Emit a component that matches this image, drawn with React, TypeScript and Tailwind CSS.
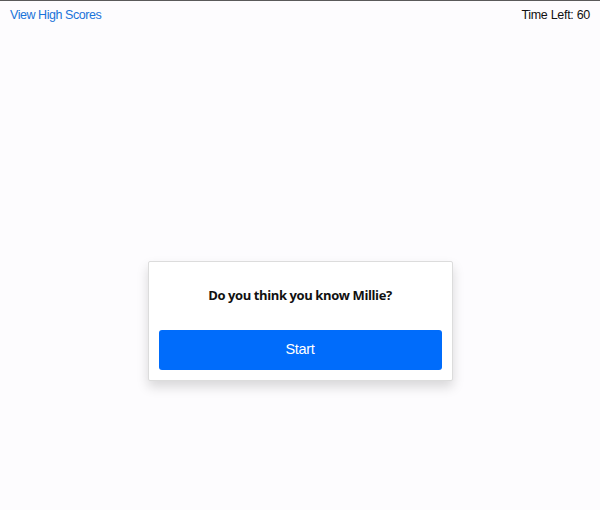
import React from "react";

export default function App() {
  return (
    <div className="min-h-[510px] w-full bg-[#fdfcfe] border-t border-[#5a5a5a] flex flex-col">
      <div className="flex justify-between items-center px-[10px] h-[28px] text-[12.5px] font-['Liberation_Sans',Arial,sans-serif]">
        <a className="text-[#1a73d9] cursor-pointer tracking-[-0.45px]">View High Scores</a>
        <span className="text-[#111] tracking-[-0.3px]">Time Left: 60</span>
      </div>
      <div className="flex justify-center mt-[232px]">
        <div className="w-[305px] bg-white border border-[#dcdcdc] rounded-[2px] shadow-[0_6px_12px_rgba(0,0,0,0.15)] p-[10px] flex flex-col gap-[10px]">
          <div className="h-[48px] flex items-center justify-center font-['Open_Sans',sans-serif] font-bold text-[13px] tracking-[-0.4px] text-[#111]">
            Do you think you know Millie?
          </div>
          <button className="h-[40px] w-full bg-[#006cfb] rounded-[3px] text-white text-[14.5px] tracking-[-0.3px] font-['Liberation_Sans',Arial,sans-serif]">
            Start
          </button>
        </div>
      </div>
    </div>
  );
}
